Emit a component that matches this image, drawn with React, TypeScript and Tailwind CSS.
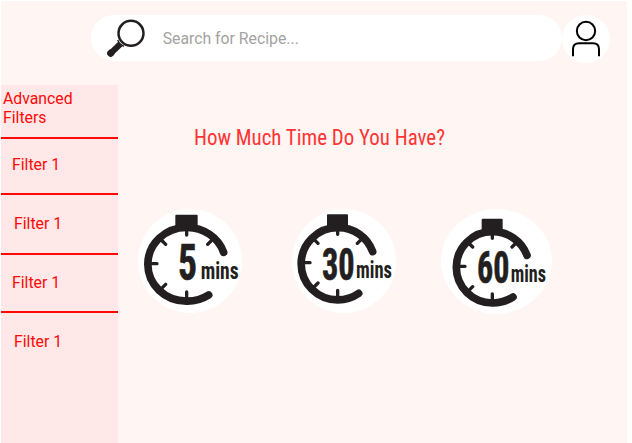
import React from "react";

type DialProps = {
  viewBox: string;
  className: string;
  disc: [number, number, number, number];
  cap: [number, number, number, number];
  arc: string;
  ticks: string;
  value: string;
  valueX: number;
  valueY: number;
  valueSize: number;
  valueWidth: number;
  unitX: number;
  unitY: number;
  unitWidth: number;
};

const dials: DialProps[] = [
  {
    viewBox: "24 28 312 312",
    className: "h-[104px] w-[104px]",
    disc: [180, 184, 156, 156],
    cap: [136, 45, 67, 42],
    arc: "M281 158A116 111 0 0 0 169.5 83.5A116 110.5 0 0 0 53.5 194A116 110.5 0 0 0 169.5 304.5A116 111 0 0 0 236 286",
    ticks: "M170 88V106M170 277V296M65 192H81M94 121L107 134M246 121L233 134M94 267L107 254",
    value: "5",
    valueX: 144,
    valueY: 242,
    valueSize: 151,
    valueWidth: 57,
    unitX: 212,
    unitY: 238,
    unitWidth: 114,
  },
  {
    viewBox: "22 28 312 312",
    className: "ml-[50px] h-[104px] w-[104px]",
    disc: [178, 184, 156, 156],
    cap: [127, 44, 63, 40],
    arc: "M264 156A109 109 0 0 0 159 84A109.5 108.5 0 0 0 49.5 192A109.5 108.5 0 0 0 159 300.5A109 109 0 0 0 222 281",
    ticks: "M159 86V104M159 272V292M60 189H76M88 119L100 131M230 119L218 131M88 262L100 250",
    value: "30",
    valueX: 112,
    valueY: 240,
    valueSize: 133,
    valueWidth: 98,
    unitX: 214,
    unitY: 236,
    unitWidth: 108,
  },
  {
    viewBox: "17 27 333 315",
    className: "ml-[45px] h-[105px] w-[111px]",
    disc: [183.5, 184, 166.5, 157],
    cap: [139, 56, 63, 38],
    arc: "M275 166A109 109 0 0 0 171 95A108 107 0 0 0 63 202A108 107 0 0 0 171 309A109 109 0 0 0 233 291",
    ticks: "M171 98V115M171 282V302M73 199H89M100 129L112 141M242 129L230 141M100 272L112 260",
    value: "60",
    valueX: 125,
    valueY: 249,
    valueSize: 133,
    valueWidth: 97,
    unitX: 226,
    unitY: 247,
    unitWidth: 106,
  },
];

function Dial(d: DialProps) {
  return (
    <svg viewBox={d.viewBox} preserveAspectRatio="none" className={`shrink-0 overflow-visible ${d.className}`}>
      <ellipse cx={d.disc[0]} cy={d.disc[1]} rx={d.disc[2]} ry={d.disc[3]} fill="#fff" />
      <rect x={d.cap[0]} y={d.cap[1]} width={d.cap[2]} height={d.cap[3]} rx="3" fill="#231f20" />
      <path d={d.arc} fill="none" stroke="#231f20" strokeWidth="23" strokeLinecap="round" strokeLinejoin="round" />
      <path d={d.ticks} fill="none" stroke="#231f20" strokeWidth="10" strokeLinecap="round" />
      <text
        x={d.valueX}
        y={d.valueY}
        fontSize={d.valueSize}
        textLength={d.valueWidth}
        lengthAdjust="spacingAndGlyphs"
        fill="#231f20"
        stroke="#231f20"
        strokeWidth="2"
        className="font-['Roboto_Condensed',Roboto,sans-serif] font-bold"
      >
        {d.value}
      </text>
      <text
        x={d.unitX}
        y={d.unitY}
        fontSize="70"
        textLength={d.unitWidth}
        lengthAdjust="spacingAndGlyphs"
        fill="#231f20"
        className="font-['Roboto_Condensed',Roboto,sans-serif] font-bold"
      >
        mins
      </text>
    </svg>
  );
}

export default function App() {
  return (
    <div className="h-[443px] w-[632px] overflow-hidden bg-white pl-px pt-px font-[Roboto,sans-serif]">
      <div className="flex h-[442px] w-[626px] flex-col bg-[#fff5f3]">
        <header className="flex h-[84px] shrink-0 items-start pl-[90px] pt-[14px]">
          <div className="flex h-[46px] w-[471px] items-center rounded-full bg-white pl-4">
            <svg viewBox="80 57 116 116" className="h-[38.67px] w-[38.67px] shrink-0">
              <circle cx="152" cy="100" r="37.5" fill="none" stroke="#231f20" strokeWidth="7.5" />
              <path d="M112 120C115 128 122 135 131 139" fill="none" stroke="#231f20" strokeWidth="4" />
              <path d="M90 161L120 132" stroke="#231f20" strokeWidth="18" />
              <path d="M91 160L92 159" stroke="#231f20" strokeWidth="21" strokeLinecap="round" />
            </svg>
            <span className="ml-[17px] pt-px text-[15.8px] leading-[20px] text-[#a3a3a3]">Search for Recipe...</span>
          </div>
          <div className="flex h-12 w-12 items-center justify-center rounded-full bg-white pr-px">
            <svg viewBox="122 57 90 112" className="h-[37.33px] w-[30px]">
              <circle cx="167" cy="90" r="27.5" fill="none" stroke="#000" strokeWidth="6" />
              <path d="M128 166V145Q128 127 146 127H188Q206 127 206 145V166" fill="none" stroke="#000" strokeWidth="6" />
            </svg>
          </div>
        </header>
        <div className="flex min-h-0 flex-1">
          <aside className="w-[117px] shrink-0 bg-[#ffe8e7] text-[15.8px] leading-[18.5px] text-[#ff0808]">
            <div className="h-[54px] border-b-2 border-[#ff0808] pl-[2px] pt-[5px]">
              Advanced
              <br />
              Filters
            </div>
            <div className="h-[56px] border-b-2 border-[#ff0808] pl-[11px] pt-[17px]">Filter 1</div>
            <div className="h-[60px] border-b-2 border-[#ff0808] pl-[13px] pt-[20px]">Filter 1</div>
            <div className="h-[58px] border-b-2 border-[#ff0808] pl-[11px] pt-[19px]">Filter 1</div>
            <div className="pl-[13px] pt-[20px]">Filter 1</div>
          </aside>
          <main className="flex-1">
            <svg className="ml-[76px] mt-[39px] block h-[30px] w-[255px]">
              <text
                x="0"
                y="21"
                fontSize="21.3"
                textLength="251"
                lengthAdjust="spacingAndGlyphs"
                fill="#ff3434"
                className="font-['Roboto_Condensed',Roboto,sans-serif]"
              >
                How Much Time Do You Have?
              </text>
            </svg>
            <div className="ml-5 mt-[55px] flex items-start">
              {dials.map((d) => (
                <Dial key={d.value} {...d} />
              ))}
            </div>
          </main>
        </div>
      </div>
    </div>
  );
}
